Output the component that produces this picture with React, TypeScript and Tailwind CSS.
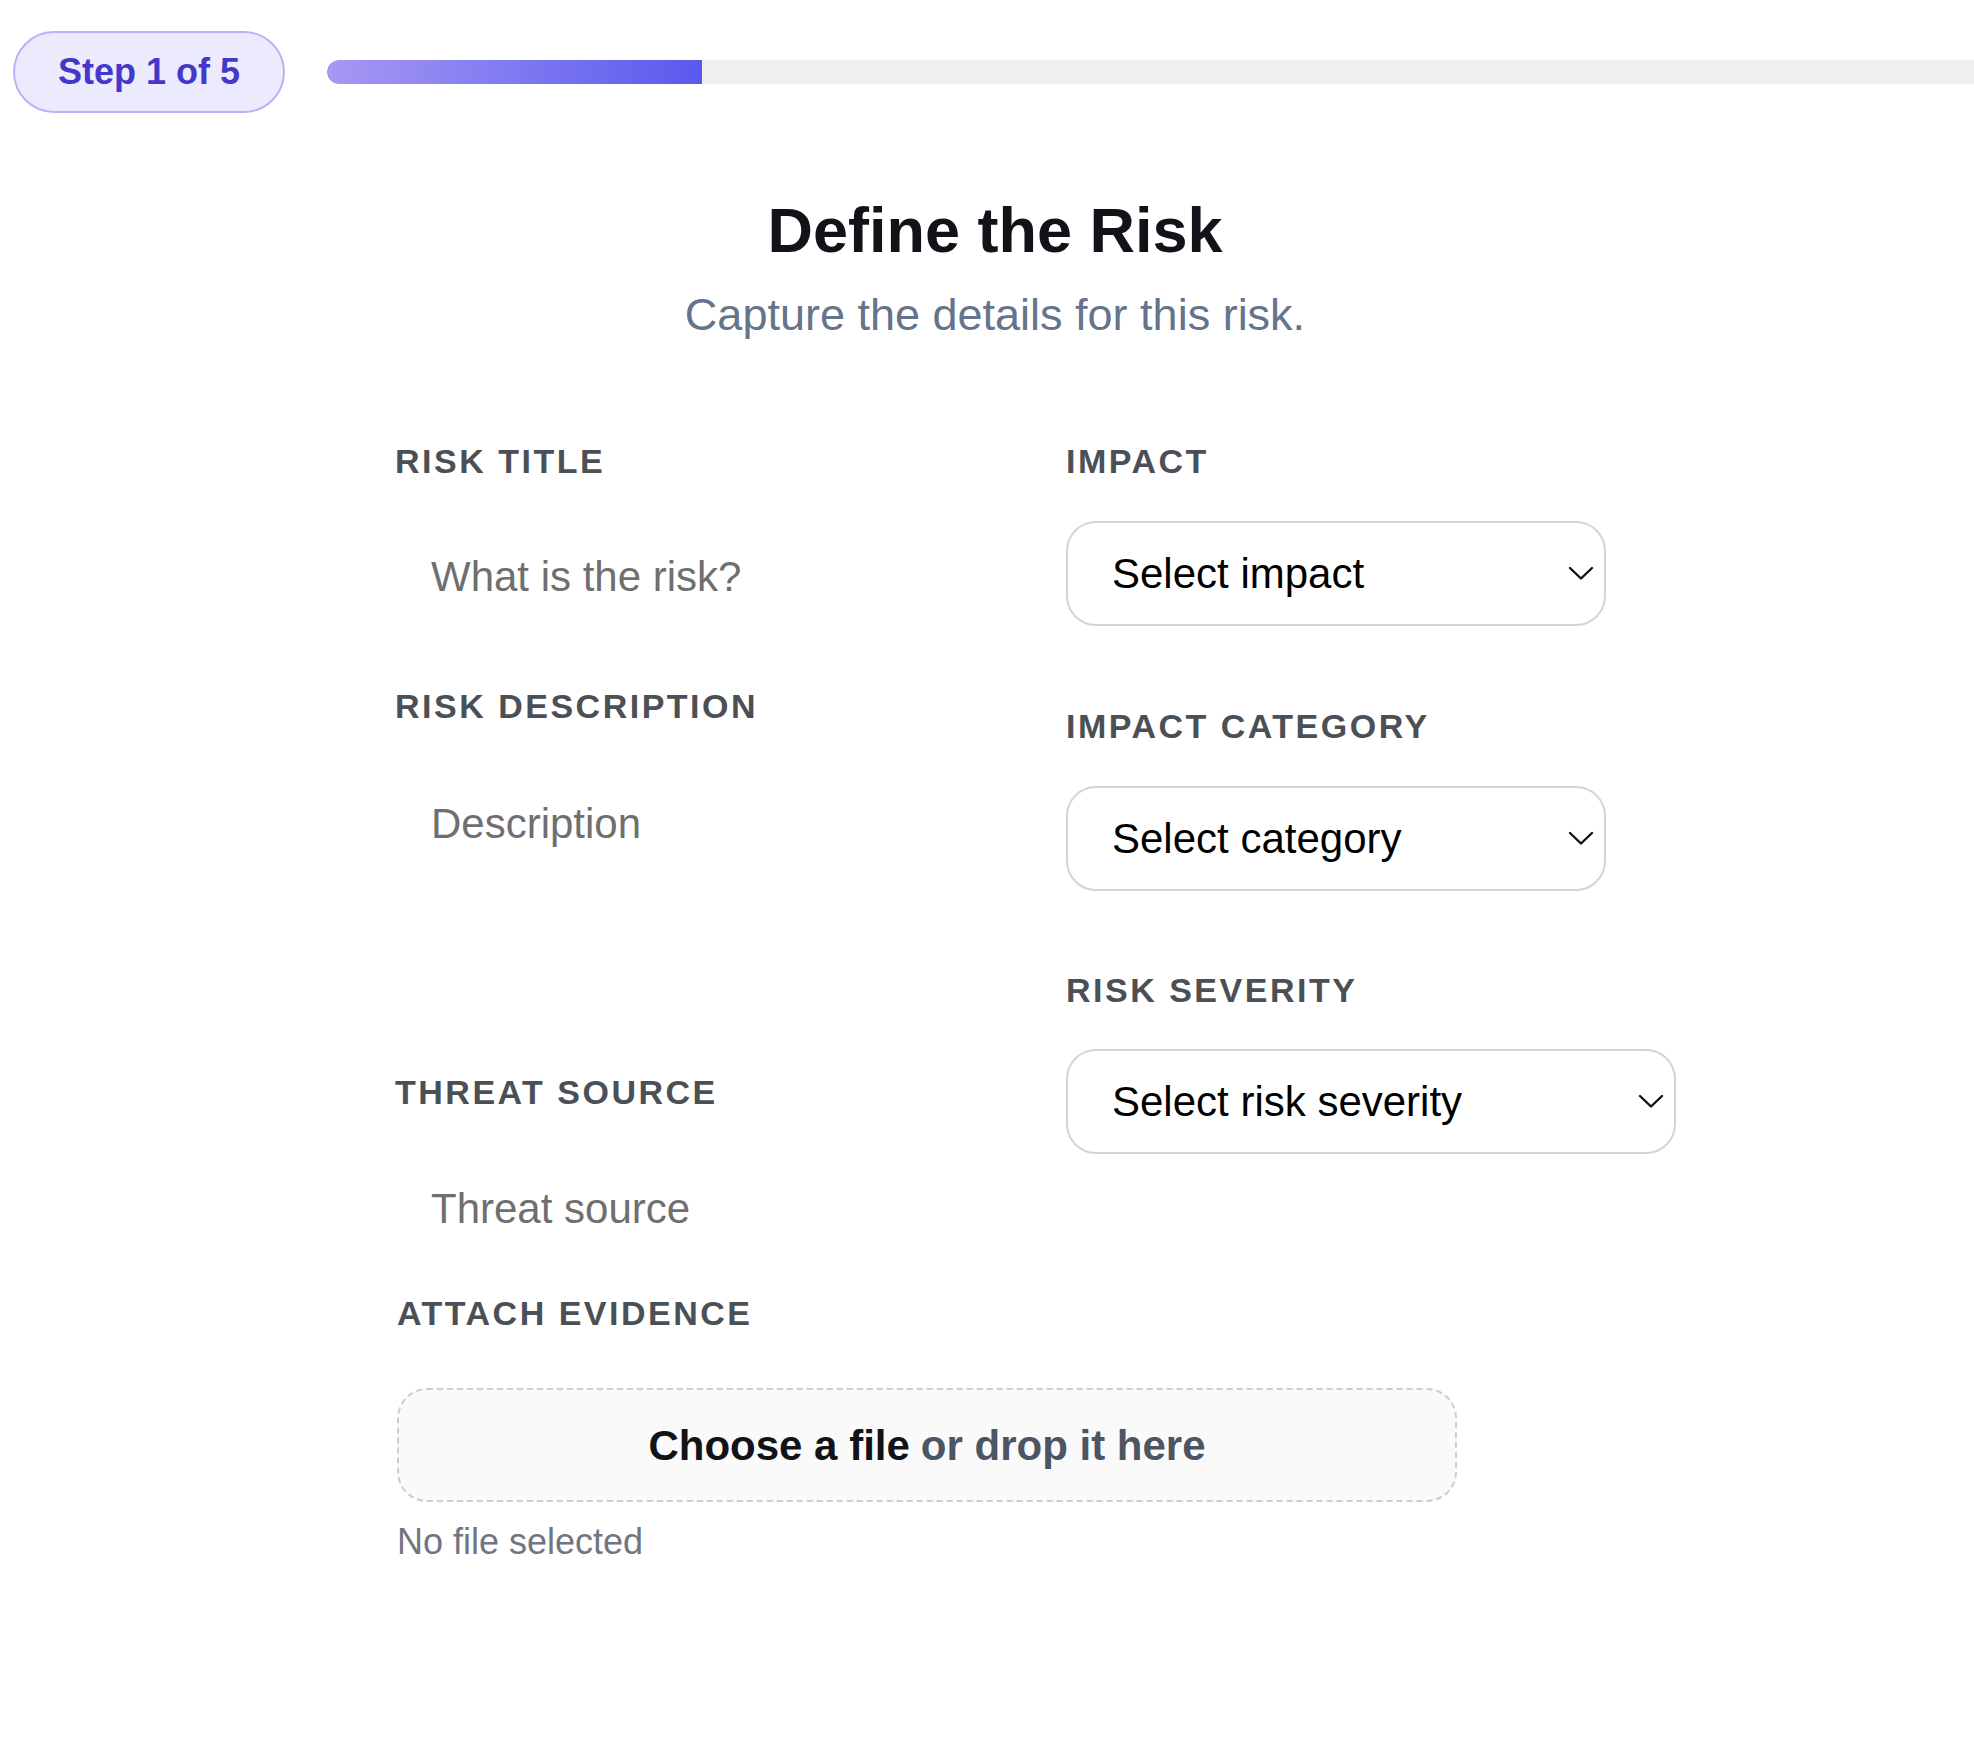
import React from "react";

function Chevron() {
  return (
    <svg width="26" height="15" viewBox="0 0 26 15" fill="none" aria-hidden="true">
      <path d="M2 2 L13 12.5 L24 2" stroke="#111" strokeWidth="2.4" strokeLinecap="round" strokeLinejoin="round" />
    </svg>
  );
}

function FieldLabel({ children }: { children: React.ReactNode }) {
  return (
    <div className="text-[34px] leading-[36px] font-bold tracking-[2.5px] text-[#4b4f56] uppercase">
      {children}
    </div>
  );
}

function SelectBox({ text, width, className }: { text: string; width: string; className?: string }) {
  return (
    <div
      role="combobox"
      className={`${width} ${className ?? ""} h-[105px] rounded-[30px] border-2 border-[#d4d4d4] bg-white flex items-center justify-between pl-[44px] pr-[10px]`}
    >
      <span className="text-[42px] text-black">{text}</span>
      <Chevron />
    </div>
  );
}

export default function App() {
  return (
    <div className="min-h-screen w-full overflow-hidden bg-white font-['Liberation_Sans',Arial,sans-serif]">
      {/* step indicator + progress */}
      <div className="flex items-center pt-[31px] pl-[13px]">
        <div className="h-[82px] w-[272px] shrink-0 rounded-full border-2 border-[#b9b2f6] bg-[#ebebfd] flex items-center justify-center text-[36px] font-bold text-[#4338ca]">
          Step 1 of 5
        </div>
        <div className="ml-[42px] flex-1 h-[24px] rounded-l-full bg-[#f0f0f0] overflow-hidden">
          <div className="h-full w-[375px] rounded-l-full bg-linear-to-r from-[#a697f2] to-[#5b58ee]" />
        </div>
      </div>

      {/* heading */}
      <div className="text-center pl-[16px]">
        <h1 className="mt-[81px] text-[63px] leading-[72px] font-bold text-[#111318]">Define the Risk</h1>
        <p className="mt-[22px] text-[45px] leading-[54px] text-[#64748b]">Capture the details for this risk.</p>
      </div>

      {/* form */}
      <div className="mt-[101px] w-[1184px] mx-auto">
        <div className="grid grid-cols-[671px_1fr]">
          <div className="flex flex-col">
            <FieldLabel>Risk Title</FieldLabel>
            <input
              placeholder="What is the risk?"
              className="mt-[53px] h-[90px] w-[520px] bg-transparent pl-[36px] text-[42px] text-black placeholder:text-[#6f6f6f] outline-none"
            />
            <div className="mt-[66px]">
              <FieldLabel>Risk Description</FieldLabel>
            </div>
            <textarea
              placeholder="Description"
              className="mt-[54px] h-[230px] w-[520px] resize-none bg-transparent pt-[22px] pl-[36px] text-[42px] leading-[48px] text-black placeholder:text-[#6f6f6f] outline-none"
            />
            <div className="mt-[66px]">
              <FieldLabel>Threat Source</FieldLabel>
            </div>
            <input
              placeholder="Threat source"
              className="mt-[54px] h-[90px] w-[520px] bg-transparent pl-[36px] text-[42px] text-black placeholder:text-[#6f6f6f] outline-none"
            />
          </div>

          <div className="flex flex-col">
            <FieldLabel>Impact</FieldLabel>
            <SelectBox text="Select impact" width="w-[540px]" className="mt-[42px]" />
            <div className="mt-[82px]">
              <FieldLabel>Impact Category</FieldLabel>
            </div>
            <SelectBox text="Select category" width="w-[540px]" className="mt-[42px]" />
            <div className="mt-[81px]">
              <FieldLabel>Risk Severity</FieldLabel>
            </div>
            <SelectBox text="Select risk severity" width="w-[610px]" className="mt-[41px]" />
          </div>
        </div>

        {/* evidence upload */}
        <div className="mt-[41px] pl-[2px]">
          <FieldLabel>Attach Evidence</FieldLabel>
          <div className="mt-[57px] h-[114px] w-[1060px] rounded-[30px] border-2 border-dashed border-[#cdcdcd] bg-[#fafafb] flex items-center justify-center text-[42px] font-bold">
            <span className="text-[#111318]">Choose a file</span>
            <span className="ml-[11px] text-[#4b5563]">or drop it here</span>
          </div>
          <div className="mt-[19px] text-[36px] leading-[42px] text-[#71757f]">No file selected</div>
        </div>
      </div>
    </div>
  );
}
